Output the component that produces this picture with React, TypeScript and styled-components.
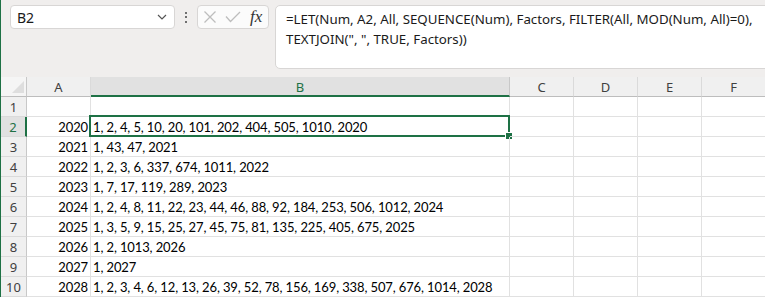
import React from 'react';
import styled, { createGlobalStyle } from 'styled-components';

const Global = createGlobalStyle`
  html, body { margin: 0; padding: 0; background: #ffffff; overflow: hidden; }
  #root { width: 765px; height: 297px; }
`;

const GREEN = '#1e7145';

const Window = styled.div`
  width: 765px;
  height: 297px;
  overflow: hidden;
  box-sizing: border-box;
  border-left: 1px solid ${GREEN};
  display: flex;
  flex-direction: column;
  background: #ffffff;
`;

const TopBar = styled.div`
  height: 77px;
  flex: 0 0 77px;
  box-sizing: border-box;
  background: #f0eeed;
  display: flex;
  align-items: flex-start;
  padding: 5px 0 0 9px;
  overflow: hidden;
`;

const NameBox = styled.div`
  width: 165px;
  height: 24px;
  box-sizing: border-box;
  background: #ffffff;
  border: 1px solid #d8d6d5;
  border-radius: 4px;
  display: flex;
  align-items: center;
  justify-content: space-between;
  padding: 0 7px 0 6px;
  font-family: 'Noto Sans', sans-serif;
  font-size: 14px;
  color: #1a1a1a;
`;

const Dots = styled.div`
  width: 22px;
  height: 24px;
  display: flex;
  flex-direction: column;
  align-items: center;
  justify-content: center;
  gap: 2.5px;
`;

const Dot = styled.span`
  width: 2px;
  height: 2px;
  background: #444;
  border-radius: 1px;
`;

const FuncBox = styled.div`
  width: 72px;
  height: 24px;
  box-sizing: border-box;
  background: #fbfbfb;
  border: 1px solid #d8d6d5;
  border-radius: 4px;
  display: flex;
  align-items: center;
  padding: 0 0 0 5px;
  gap: 8px;
`;

const Fx = styled.span`
  font-family: 'Liberation Serif', serif;
  font-style: italic;
  font-size: 17px;
  color: #333;
  margin-left: 1px;
`;

const FormulaBox = styled.div`
  flex: 1;
  margin-left: 6px;
  margin-right: -10px;
  height: 64px;
  box-sizing: border-box;
  background: #ffffff;
  border: 1px solid #d8d6d5;
  border-radius: 5px;
  padding: 3px 10px 0 10px;
  font-family: 'Noto Sans', sans-serif;
  font-size: 13.3px;
  line-height: 20px;
  color: #1a1a1a;
`;

const Sheet = styled.div`
  display: grid;
  grid-template-columns: 26px 64px 419px 64px 64px 64px 64px;
  grid-template-rows: 20px repeat(10, 20px);
  width: 765px;
`;

const Corner = styled.div`
  position: relative;
  box-sizing: border-box;
  background: #f5f5f5;
  border-right: 1px solid #c8c8c8;
  border-bottom: 1px solid #bdbdbd;
  &::after {
    content: '';
    position: absolute;
    right: 2px;
    bottom: 3px;
    width: 0;
    height: 0;
    border-left: 12px solid transparent;
    border-bottom: 12px solid #dedede;
  }
`;

const ColHeader = styled.div<{ $selected?: boolean }>`
  box-sizing: border-box;
  display: flex;
  align-items: center;
  justify-content: center;
  padding-top: 1px;
  font-family: 'Noto Sans', sans-serif;
  font-size: 13px;
  background: ${(p) => (p.$selected ? '#e1e1e1' : '#f0f0f0')};
  color: ${(p) => (p.$selected ? GREEN : '#404040')};
  border-right: 1px solid ${(p) => (p.$selected ? '#c8c8c8' : '#dadada')};
  border-bottom: ${(p) => (p.$selected ? `2px solid ${GREEN}` : '1px solid #bdbdbd')};
`;

const RowHeader = styled.div<{ $selected?: boolean }>`
  box-sizing: border-box;
  display: flex;
  align-items: center;
  justify-content: center;
  font-family: 'Noto Sans', sans-serif;
  font-size: 13px;
  background: ${(p) => (p.$selected ? '#e1e1e1' : '#f0f0f0')};
  color: ${(p) => (p.$selected ? GREEN : '#404040')};
  border-right: ${(p) => (p.$selected ? `2px solid ${GREEN}` : '1px solid #c8c8c8')};
  border-bottom: 1px solid #dadada;
`;

const Cell = styled.div<{ $align?: 'left' | 'right' }>`
  position: relative;
  box-sizing: border-box;
  display: flex;
  align-items: center;
  justify-content: ${(p) => (p.$align === 'right' ? 'flex-end' : 'flex-start')};
  padding: 1px 2px 0 2px;
  white-space: nowrap;
  font-family: 'Lato', sans-serif;
  font-size: 13px;
  letter-spacing: -0.12px;
  color: #000000;
  border-right: 1px solid #e1e1e1;
  border-bottom: 1px solid #e1e1e1;
`;

const Selection = styled.div`
  position: absolute;
  left: -2px;
  top: -2px;
  right: -1px;
  bottom: -1px;
  border: 2px solid ${GREEN};
  pointer-events: none;
`;

const FillHandle = styled.div`
  position: absolute;
  right: -5px;
  bottom: -5px;
  width: 6px;
  height: 6px;
  background: ${GREEN};
  border: 1px solid #ffffff;
`;

const Chevron = () => (
  <svg width="10" height="6" viewBox="0 0 10 6">
    <path d="M1 1 L5 5 L9 1" fill="none" stroke="#555" strokeWidth="1.2" />
  </svg>
);

const XIcon = () => (
  <svg width="14" height="14" viewBox="0 0 14 14">
    <path d="M1.5 1.5 L12.5 12.5 M12.5 1.5 L1.5 12.5" stroke="#bdbdbd" strokeWidth="1.3" fill="none" />
  </svg>
);

const CheckIcon = () => (
  <svg width="16" height="12" viewBox="0 0 16 12">
    <path d="M1 5.5 L5.5 10.5 L15 1" stroke="#bdbdbd" strokeWidth="1.3" fill="none" />
  </svg>
);

const rows: Array<[number | null, string]> = [
  [null, ''],
  [2020, '1, 2, 4, 5, 10, 20, 101, 202, 404, 505, 1010, 2020'],
  [2021, '1, 43, 47, 2021'],
  [2022, '1, 2, 3, 6, 337, 674, 1011, 2022'],
  [2023, '1, 7, 17, 119, 289, 2023'],
  [2024, '1, 2, 4, 8, 11, 22, 23, 44, 46, 88, 92, 184, 253, 506, 1012, 2024'],
  [2025, '1, 3, 5, 9, 15, 25, 27, 45, 75, 81, 135, 225, 405, 675, 2025'],
  [2026, '1, 2, 1013, 2026'],
  [2027, '1, 2027'],
  [2028, '1, 2, 3, 4, 6, 12, 13, 26, 39, 52, 78, 156, 169, 338, 507, 676, 1014, 2028'],
];

const columns = ['A', 'B', 'C', 'D', 'E', 'F'];

export default function App() {
  return (
    <>
      <Global />
      <Window>
        <TopBar>
          <NameBox>
            <span>B2</span>
            <Chevron />
          </NameBox>
          <Dots>
            <Dot />
            <Dot />
            <Dot />
          </Dots>
          <FuncBox>
            <XIcon />
            <CheckIcon />
            <Fx>fx</Fx>
          </FuncBox>
          <FormulaBox>
            =LET(Num, A2, All, SEQUENCE(Num), Factors, FILTER(All, MOD(Num, All)=0),
            <br />
            TEXTJOIN(", ", TRUE, Factors))
          </FormulaBox>
        </TopBar>
        <Sheet>
          <Corner />
          {columns.map((c) => (
            <ColHeader key={c} $selected={c === 'B'}>
              {c}
            </ColHeader>
          ))}
          {rows.map(([year, factors], i) => {
            const n = i + 1;
            const sel = n === 2;
            return (
              <React.Fragment key={n}>
                <RowHeader $selected={sel}>{n}</RowHeader>
                <Cell $align="right">{year ?? ''}</Cell>
                <Cell>
                  {factors}
                  {sel && (
                    <Selection>
                      <FillHandle />
                    </Selection>
                  )}
                </Cell>
                <Cell />
                <Cell />
                <Cell />
                <Cell />
              </React.Fragment>
            );
          })}
        </Sheet>
      </Window>
    </>
  );
}
